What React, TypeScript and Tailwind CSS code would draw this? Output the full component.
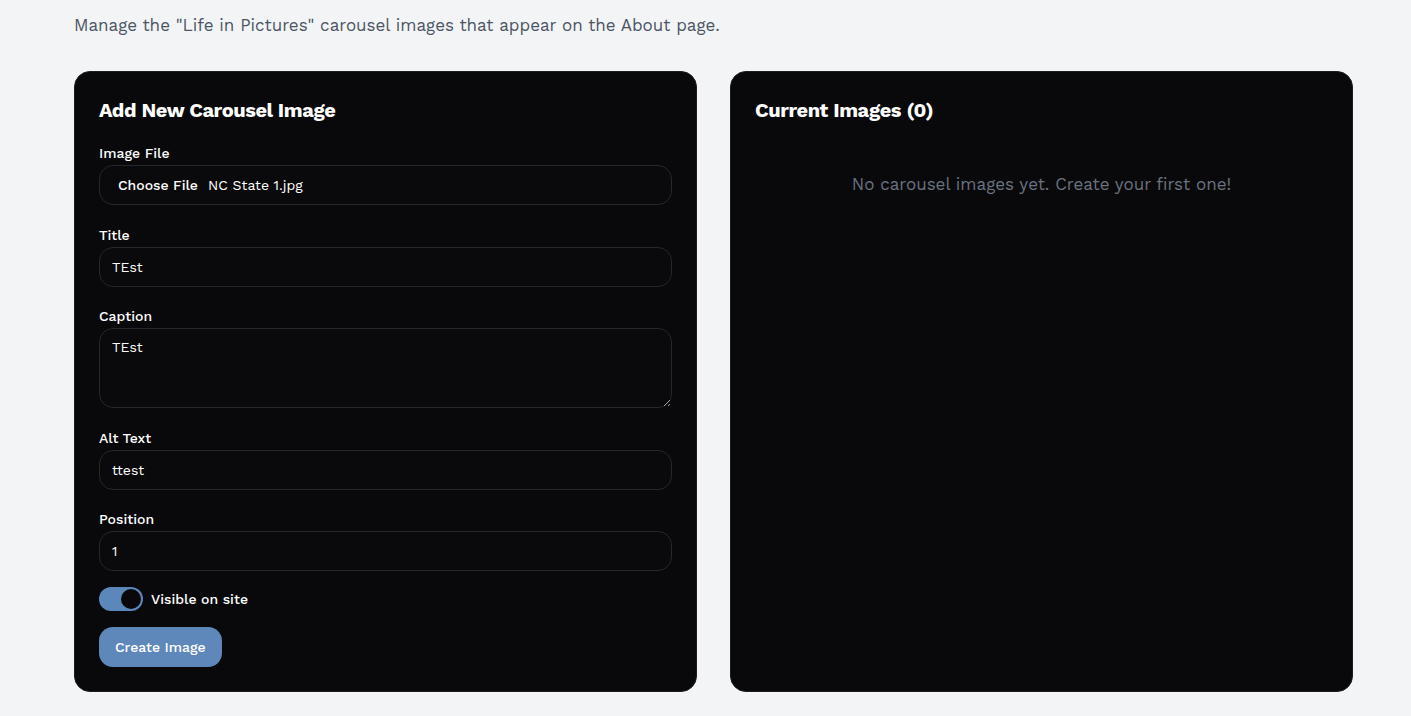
import React from 'react';

const inputClass =
  'h-10 w-full rounded-[14px] border border-[#26272b] bg-[#0a0a0c] px-3 text-sm text-white outline-none';

function Field({ label, children }: { label: string; children: React.ReactNode }) {
  return (
    <div className="flex flex-col">
      <label className="mb-[2px] h-5 text-sm font-medium leading-5 text-white">{label}</label>
      {children}
    </div>
  );
}

export default function App() {
  return (
    <div
      className="min-h-screen bg-[#f3f4f6] pt-3"
      style={{ fontFamily: "'Work Sans', Inter, 'Noto Sans', sans-serif" }}
    >
      <div className="ml-[74px] w-[1279px]">
        <p className="text-[17px] leading-[26px] text-[#4b5563]">
          Manage the "Life in Pictures" carousel images that appear on the About page.
        </p>

        <div className="mt-[33px] grid grid-cols-2 gap-[33px]">
          {/* Add form */}
          <div className="rounded-2xl border border-[#1c1c20] bg-[#09090b] p-6">
            <h2 className="mb-[19px] h-7 text-xl font-bold leading-7 tracking-[-0.02em] text-white">
              Add New Carousel Image
            </h2>

            <div className="flex flex-col gap-[19.5px]">
              <Field label="Image File">
                <div className={inputClass + ' flex items-center gap-[10px] pl-[18px]'}>
                  <span className="font-medium text-white">Choose File</span>
                  <span className="text-white">NC State 1.jpg</span>
                </div>
              </Field>

              <Field label="Title">
                <input className={inputClass} defaultValue="TEst" />
              </Field>

              <Field label="Caption">
                <textarea
                  className="h-20 w-full resize-y rounded-[14px] border border-[#26272b] bg-[#0a0a0c] px-3 py-2 text-sm text-white outline-none"
                  defaultValue="TEst"
                />
              </Field>

              <Field label="Alt Text">
                <input className={inputClass} defaultValue="ttest" />
              </Field>

              <Field label="Position">
                <input className={inputClass} defaultValue="1" />
              </Field>
            </div>

            <div className="mt-4 flex items-center gap-2">
              <div className="flex h-6 w-11 items-center justify-end rounded-full bg-[#5b87bb] p-[2px]">
                <div className="h-5 w-5 rounded-full bg-[#09090b]" />
              </div>
              <span className="text-sm font-medium text-white">Visible on site</span>
            </div>

            <button className="mt-4 h-10 rounded-[14px] bg-[#5f88ba] px-4 text-sm font-medium text-white">
              Create Image
            </button>
          </div>

          {/* Current list */}
          <div className="rounded-2xl border border-[#1c1c20] bg-[#09090b] p-6">
            <h2 className="h-7 text-xl font-bold leading-7 tracking-[-0.02em] text-white">
              Current Images (0)
            </h2>
            <p className="mt-12 text-center text-[17px] leading-6 text-[#6b7280]">
              No carousel images yet. Create your first one!
            </p>
          </div>
        </div>
      </div>
    </div>
  );
}
